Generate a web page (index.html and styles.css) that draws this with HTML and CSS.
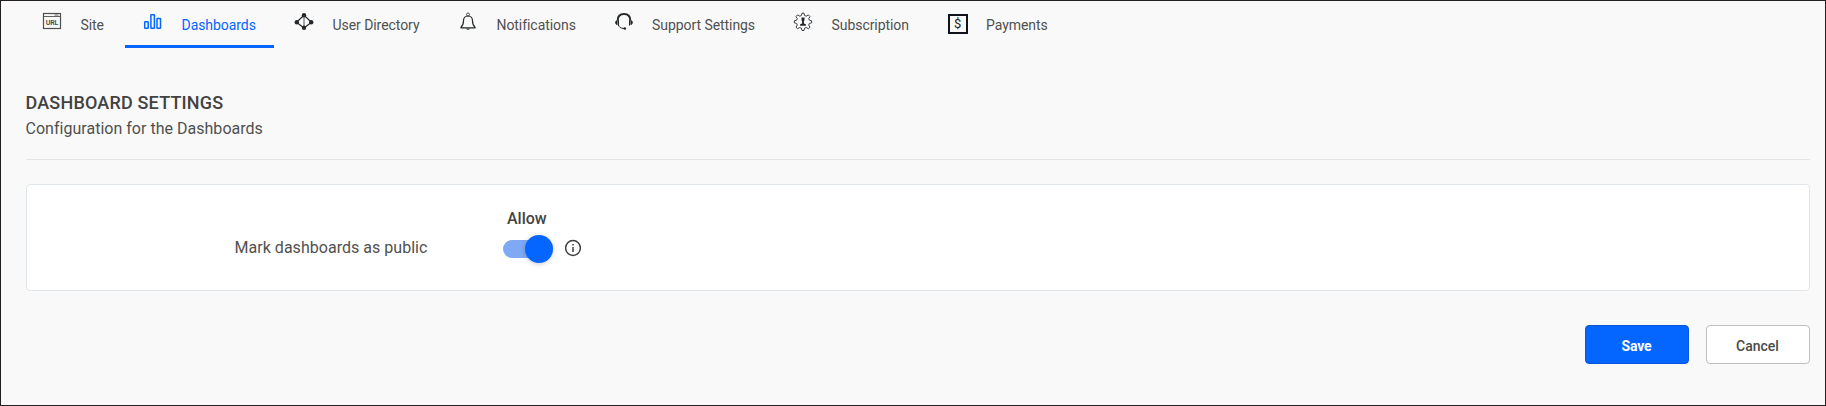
FILE: index.html
```html
<!DOCTYPE html>
<html lang="en">
<head>
<meta charset="utf-8">
<title>Dashboard Settings</title>
<link rel="stylesheet" href="styles.css">
</head>
<body>
<div class="page">
  <nav class="tabs">
    <a class="tab tab-site">
      <svg class="icon" viewBox="0 0 20 20" fill="none" stroke="currentColor"><rect x="1.500" y="1.500" width="17" height="15" stroke-width="1.200"/><path d="M1.500 4.500h17M12.500 3h4" stroke-width=".9"/><text class="url-text" x="10" y="13.300" text-anchor="middle">URL</text></svg>
      <span class="label">Site</span>
    </a>
    <a class="tab tab-dashboards active">
      <svg class="icon" viewBox="0 0 20 20" fill="none" stroke="currentColor" stroke-width="1.500"><rect x="1.700" y="9.800" width="3.500" height="6.500" rx=".5"/><rect x="7.900" y="2.700" width="3.500" height="13.600" rx=".5"/><rect x="14" y="6.500" width="3.500" height="9.800" rx=".5"/></svg>
      <span class="label">Dashboards</span>
    </a>
    <a class="tab tab-directory">
      <svg class="icon dark" viewBox="0 0 20 20" fill="none" stroke="currentColor"><path d="M10 3.300L2.500 10.300L10 16L17.500 10.300Z" stroke-width="1.200"/><path d="M10 3.300v13" stroke-width=".8"/><g fill="currentColor" stroke="none"><circle cx="10" cy="3.200" r="2.200"/><circle cx="2.800" cy="10.300" r="2.200"/><circle cx="17.200" cy="10.300" r="2.200"/><circle cx="10" cy="15.800" r="2.200"/></g></svg>
      <span class="label">User Directory</span>
    </a>
    <a class="tab tab-notifications">
      <svg class="icon dark" viewBox="0 0 20 20" fill="none" stroke="currentColor" stroke-width="1.200"><circle cx="10" cy="2.500" r="1.500" stroke-width=".8"/><path d="M10 4C7 4 5.500 6.200 5.500 8.700c0 3.500-.8 5-2.500 6.500v.7h14v-.7C15.300 13.700 14.500 12.200 14.500 8.700c0-2.500-1.500-4.700-4.500-4.700Z"/><path d="M8.200 16.400a1.900 1.900 0 0 0 3.600 0Z" fill="currentColor" stroke="none"/></svg>
      <span class="label">Notifications</span>
    </a>
    <a class="tab tab-support">
      <svg class="icon dark" viewBox="0 0 20 20" fill="none" stroke="currentColor"><path d="M3.700 8.500C3.700 4.500 6 2 10 2s6.300 2.500 6.300 6.500" stroke-width="2"/><path d="M4.500 8v5.500M15.500 8v5.500" stroke-width="1"/><path d="M3.200 8.500v4.200C1.200 12.400.9 9 3.200 8.500ZM16.800 8.500v4.200c2-.3 2.300-3.700 0-4.200Z" fill="currentColor" stroke-width=".8"/><path d="M4.500 13c.6 2 2 3.200 4.500 3.400h2" stroke-width="1"/><circle cx="10.800" cy="16.500" r="1.300" fill="currentColor" stroke="none"/></svg>
      <span class="label">Support Settings</span>
    </a>
    <a class="tab tab-subscription">
      <svg class="icon dark" viewBox="0 0 20 20" fill="none" stroke="currentColor" stroke-width=".9" stroke-linejoin="round"><path d="M9 1.200h2l.6 2.300 1.600.7 2.200-1.300 1.600 1.600-1.300 2.200.7 1.500 2.300.6v2l-2.300.7-.7 1.500 1.300 2.200-1.600 1.500-2.200-1.200-1.600.7-.6 2.300H9l-.6-2.300-1.600-.7-2.200 1.200L3 15.200 4.300 13l-.7-1.500-2.300-.7v-2l2.300-.6.7-1.500L3 4.500l1.600-1.600 2.200 1.300 1.600-.7Z"/><path d="M8.500 5.500h3v2.700l-.6 1v2.300l2 .8v1.500H7.100v-1.500l2-.8V9.200l-.6-1Z" fill="currentColor" stroke="none"/></svg>
      <span class="label">Subscription</span>
    </a>
    <a class="tab tab-payments">
      <span class="pay-icon">$</span>
      <span class="label">Payments</span>
    </a>
  </nav>
  <main class="content">
    <header class="heading">
      <h1 class="title">DASHBOARD SETTINGS</h1>
      <p class="subtitle">Configuration for the Dashboards</p>
    </header>
    <section class="card">
      <div class="setting-name">Mark dashboards as public</div>
      <div class="setting-control">
        <div class="column-name">Allow</div>
        <div class="control-row">
          <span class="toggle"><span class="knob"></span></span>
          <svg class="info" viewBox="0 0 18 18" fill="none" stroke="currentColor" stroke-width="1.500"><circle cx="9" cy="9" r="7.400"/><path d="M9 8v5M9 5v1.600"/></svg>
        </div>
      </div>
    </section>
    <footer class="actions">
      <button class="button save">Save</button>
      <button class="button cancel">Cancel</button>
    </footer>
  </main>
</div>
</body>
</html>
```
FILE: styles.css
```css
* { box-sizing: border-box; }
body { margin: 0; font-family: Roboto, sans-serif; color: #505050; }
.page { width: 1826px; height: 406px; background: #f9f9f9; border: 1px solid #231f20; overflow: hidden; }
.tabs { display: flex; height: 47px; padding-left: 23px; }
.tab { display: flex; gap: 18.5px; padding: 11px 0 0 18px; height: 47px; font-size: 14px; line-height: 16px; letter-spacing: -.06px; white-space: nowrap; }
.label { padding-top: 5px; }
.tab-site { width: 101px; }
.tab-dashboards { width: 148.5px; margin-right: 2.5px; }
.tab-directory { width: 164px; }
.tab-notifications { width: 155.5px; }
.tab-support { width: 179.5px; }
.tab-subscription { width: 154.5px; }
.active { color: #0565ff; border-bottom: 3px solid #0565ff; }
.icon { width: 20px; height: 20px; flex: none; }
.dark { color: #25282b; }
.url-text { font: 700 7px Roboto, sans-serif; fill: currentColor; stroke: none; }
.pay-icon { width: 20px; height: 20px; margin-top: 2px; border: 2px solid #10131a; color: #222; font-size: 13px; line-height: 16px; text-align: center; }
.content { padding: 43px 15.5px 0 24.5px; }
.heading { height: 69px; border-bottom: 1px solid #e3e5e6; }
.title { margin: 0; font-size: 18px; line-height: 24px; font-weight: 500; letter-spacing: .18px; color: #424242; }
.subtitle { margin: 0; padding-top: 2px; font-size: 16px; line-height: 24px; letter-spacing: .02px; }
.card { display: flex; height: 107px; margin-top: 24px; background: #fff; border: 1px solid #e1e6ea; border-radius: 4px; }
.setting-name { width: 476.5px; padding: 51px 0 0 208px; font-size: 16px; line-height: 24px; letter-spacing: .03px; white-space: nowrap; }
.setting-control { padding-top: 22px; }
.column-name { padding-left: 4px; font-size: 16px; font-weight: 500; line-height: 24px; color: #444; }
.control-row { display: flex; align-items: center; gap: 11px; padding-top: 2px; height: 33px; }
.toggle { display: flex; align-items: center; justify-content: flex-end; width: 50px; height: 18px; margin-top: 1px; border-radius: 9px; background: #7fa9f4; }
.knob { flex: none; width: 28px; height: 28px; border-radius: 50%; background: #0565ff; box-shadow: 0 1px 5px #0003; }
.info { width: 18px; height: 18px; margin-top: -1px; color: #3f3f3f; }
.actions { display: flex; justify-content: flex-end; gap: 17px; padding-top: 34px; }
.button { height: 39px; width: 104px; padding: 2px 0 0; border: 1px solid #bebebe; border-radius: 4px; background: #fff; color: #4a4a4a; font: 500 14px Roboto, sans-serif; }
.save { background: #0565ff; border-color: #0756d8; color: #fff; font-weight: 700; letter-spacing: -.1px; }
```
